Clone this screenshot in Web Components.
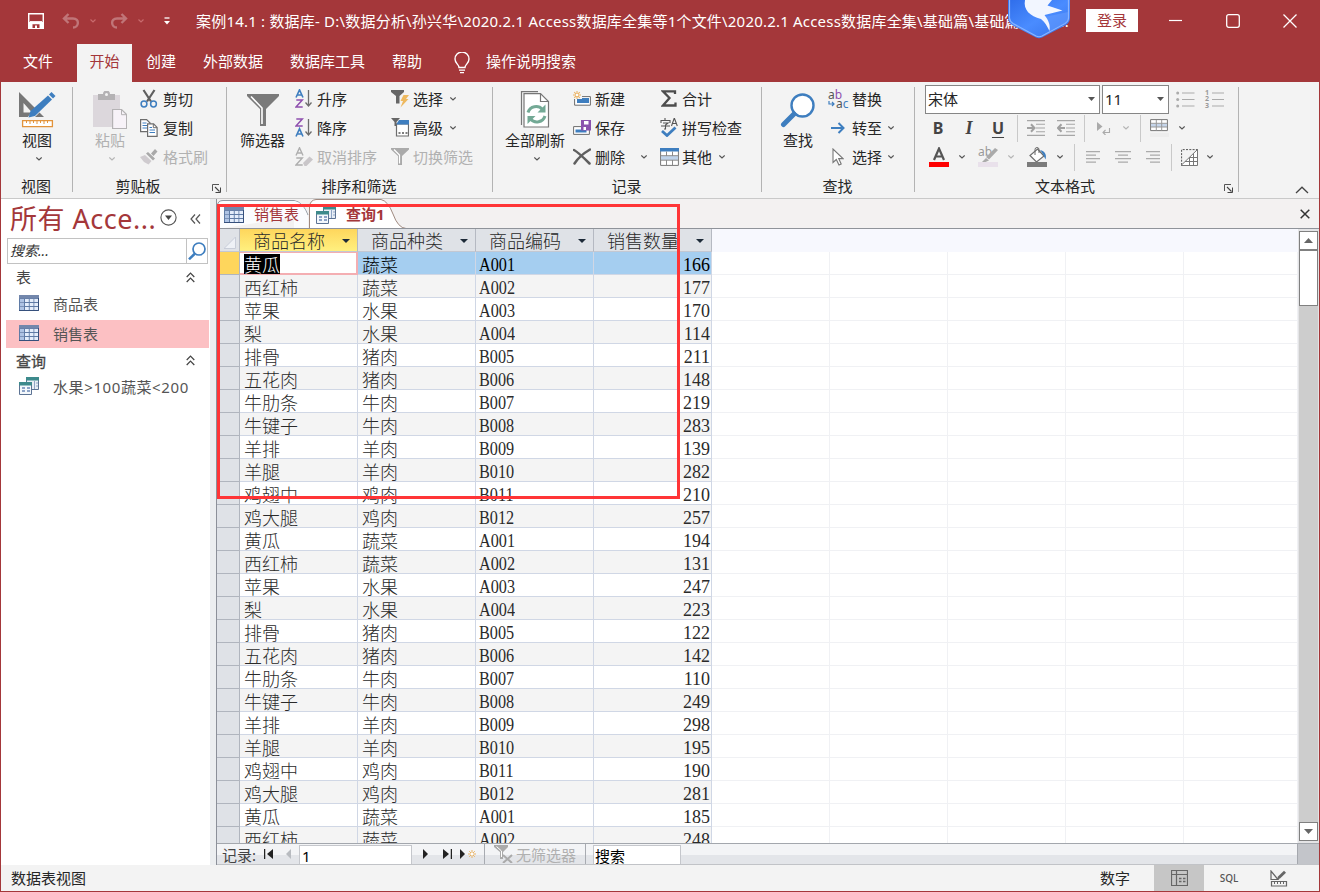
<!DOCTYPE html>
<html lang="zh-CN">
<head>
<meta charset="utf-8">
<title>案例14.1 : 数据库</title>
<style>
  body {
    margin: 0;
    font: 15px/20px "Noto Sans", "Noto Sans CJK SC", sans-serif;
    color: #262626;
  }
</style>
</head>
<body>
<access-window></access-window>

<script>
const ICONS = {
  save: [16, 16, '<path d="M.7.7h14.6v14.6H.7z" fill="none" stroke="#fff" stroke-width="1.5"/><path d="M1 9h14v6H1z" fill="#fff"/><path d="M4.500 11.200h7V15H9V12.500H7V15H4.500z" fill="#a4373a"/><path d="M2 8.800h12" stroke="#fff" stroke-width="1.400"/>'],
  undo: [18, 16, '<path d="M6.500 1L2 5.500 6.500 10M2.500 5.500H11c7 0 6 9 0 9" fill="none" stroke="#c07578" stroke-width="2.400"/>'],
  redo: [18, 16, '<path d="M11.500 1L16 5.500 11.500 10M15.500 5.500H7c-7 0-6 9 0 9" fill="none" stroke="#c07578" stroke-width="2.400"/>'],
  chevronRed: [6, 4, '<path d="M.5.500L3 3 5.500.500" fill="none" stroke="#c86a6d" stroke-width="1.200"/>'],
  customize: [6, 8, '<path d="M.5 1h5" stroke="#fff" stroke-width="1.300"/><path d="M0 4h6L3 7.500z" fill="#fff"/>'],
  bird: [62, 39, '<defs><linearGradient id="g" x1="0" y1="0" x2="1" y2="1"><stop offset="0" stop-color="#2f6dea"/><stop offset=".5" stop-color="#4a8cff"/><stop offset="1" stop-color="#3470e8"/></linearGradient></defs><path d="M0 0V18Q0 22 4 25L28 37.500Q31 39 34 37.500L58 25Q62 22 62 18V0z" fill="url(#g)"/><path d="M1.500 0V18Q1.500 21 5 23.500L28 36Q31 37.500 34 36L57 23.500Q60.500 21 60.500 18V0" fill="none" stroke="#8cb6ff" stroke-width="1.200"/><path d="M36 17L60 12V19Q60 22 56 24L42 31z" fill="#6a9fff" opacity=".5"/><path d="M17 0C15 10 22 16 33 19c4 3 6 7 8.500 12 1-6-1-11-5-16l18-4.500L39.500 5.500 44 0z" fill="#f2f6ff"/>'],
  minimize: [13, 14, '<path d="M0 6.500h13" stroke="#fff" stroke-width="1.200"/>'],
  maximize: [14, 14, '<rect x=".7" y=".7" width="12.600" height="12.600" rx="2" fill="none" stroke="#fff" stroke-width="1.300"/>'],
  close: [14, 14, '<path d="M.5.500l13 13M13.500.500l-13 13" stroke="#fff" stroke-width="1.300"/>'],
  bulb: [16, 22, '<path d="M5 15.500c0-3-4-4-4-8.500a7 7 0 0114 0c0 4.500-4 5.500-4 8.500z" fill="none" stroke="#fff" stroke-width="1.400"/><path d="M5 18.200h6M6 20.700h4" stroke="#fff" stroke-width="1.300"/>'],
  chevron: [6, 4, '<path d="M.3.500L3 3 5.700.500" fill="none" stroke="#555" stroke-width="1.200"/>'],
  chevronOff: [6, 4, '<path d="M.3.500L3 3 5.700.500" fill="none" stroke="#b5b5b5" stroke-width="1.200"/>'],
  view: [38, 38, '<path d="M1 1v25h25zM5.500 12v9.500h8.500z" fill="#777" fill-rule="evenodd"/><path d="M9 27L31 0l6 6-21 21z" fill="#f3f3f3"/><path d="M10.500 26.500l2-6.500L30 4.500l4 4L17 25z" fill="#3e7ebf"/><path d="M31 3.500L33.500 1l4 4L35 7.500z" fill="#3e7ebf"/><path d="M4.600 29.600h29.800v6H4.600z" fill="#fff" stroke="#e2933b" stroke-width="1.300"/><path d="M8.500 30v2M12 30v3M15.500 30v2M19 30v3M22.500 30v2M26 30v3M29.500 30v2" stroke="#e2933b"/>'],
  paste: [34, 38, '<path d="M0 4h27v32H0z" fill="#dcd7dc"/><path d="M5 9V3h5a3.500 3.500 0 017 0h5v6z" fill="#b4b2b4"/><circle cx="13.500" cy="3.500" r="1.500" fill="#f3f3f3"/><path d="M19.600 22h9l5 5v14h-14z" transform="translate(0 -3.500)" fill="#f7f2f8" stroke="#b4b2b4" stroke-width="1.200"/><path d="M28.500 18.500v5.200h5" fill="none" stroke="#b4b2b4"/>'],
  cut: [18, 19, '<path d="M3.500 1l7.500 11.500M14.500 1L7 12.500" stroke="#5f5f5f" stroke-width="2.200"/><circle cx="4" cy="15" r="2.900" fill="none" stroke="#3e7ebf" stroke-width="1.500"/><circle cx="13.500" cy="15" r="2.900" fill="none" stroke="#3e7ebf" stroke-width="1.500"/>'],
  copy: [18, 18, '<path d="M.6.600h6l3.500 3.500v8.500H.6z" fill="#fff" stroke="#6d6d6d" stroke-width="1.200"/><path d="M2.500 4h4M2.500 6.500h5M2.500 9h5" stroke="#3e7ebf"/><path d="M7.600 4.900h6l3.500 3.500v9H7.600z" fill="#fff" stroke="#6d6d6d" stroke-width="1.200"/><path d="M13.300 5v3.700H17" fill="none" stroke="#6d6d6d"/><path d="M9.500 8.500h2.500M9.500 11h5.500M9.500 13.500h5.500" stroke="#3e7ebf"/>'],
  brush: [18, 16, '<path d="M0 8l5-2 6.500 6-3 3.500L4 13l-4-5z" fill="#cfcbcf"/><path d="M6 4.500L8 3l7 6.500-2 2zM11 4.500L15 0l2.500 2.500-4 4.500z" fill="#a9a9a9"/>'],
  funnel: [32, 32, '<path d="M0 0h32v2L19 15v17h-6V15L0 2z" fill="#7a7a7a"/><path d="M4 2.500L15 14v16" fill="none" stroke="#fff" stroke-width="1.600"/>'],
  sortAsc: [18, 19, '<path d="M1 8.500L4.500.800 8 8.500M2.200 6h4.600" fill="none" stroke="#3e7ebf" stroke-width="1.600"/><path d="M1.300 11h6L1 18h6.700" fill="none" stroke="#8e4fae" stroke-width="1.500"/><path d="M13.500 1v16M10.500 13.500l3 3.500 3-3.500" fill="none" stroke="#6d6d6d" stroke-width="1.300"/>'],
  sortDesc: [18, 19, '<path d="M1.300 1h6L1 8h6.700" fill="none" stroke="#8e4fae" stroke-width="1.500"/><path d="M1 18.500l3.500-7.700L8 18.500M2.200 16h4.600" fill="none" stroke="#3e7ebf" stroke-width="1.600"/><path d="M13.500 1v16M10.500 13.500l3 3.500 3-3.500" fill="none" stroke="#6d6d6d" stroke-width="1.300"/>'],
  sortClear: [18, 19, '<path d="M1 8.500L4.500.800 8 8.500M2.200 6h4.600M1.300 11h6L1 18h6.700" fill="none" stroke="#aeaeae" stroke-width="1.400"/><path d="M8 16l6.500-6.500 3.500 3-6.500 6.500H9.500z" fill="#c9c6c9"/>'],
  filterSelect: [18, 18, '<path d="M0 0h13v2L8.500 6v7.500H5V6L0 2z" fill="#666"/><path d="M12.500 5H18l-3 4h2.500l-8 8.500 2.500-6.500H9.500z" fill="#eeb95f"/>'],
  filterAdvanced: [18, 19, '<path d="M5.500 6h12v12h-12z" fill="#fff" stroke="#6d6d6d" stroke-width="1.200"/><path d="M8 2h10v4.500H5z" fill="#3e7ebf"/><path d="M0 0h9L5.500 4v4H3.500V4z" fill="#666"/><path d="M7.500 15h2M11 15h2M14.500 15h2" stroke="#555" stroke-width="1.600"/>'],
  filterToggle: [18, 17, '<path d="M0 0h18v1.500L11 8v9H7V8L0 1.500z" fill="#aaa"/><path d="M3 1.500L8.500 7v8.500" fill="none" stroke="#fff" stroke-width="1.200"/>'],
  refresh: [30, 38, '<path d="M1.500 34V.600H18" fill="none" stroke="#777" stroke-width="1.200"/><path d="M4 2.600h16.500l8 8V36H4z" fill="#fff" stroke="#777" stroke-width="1.200"/><path d="M20.500 2.500v8h8" fill="none" stroke="#777" stroke-width="1.200"/><path d="M8 21.500a8.500 8.500 0 0114.500-3M25 25a8.500 8.500 0 01-14.500 3" fill="none" stroke="#73a995" stroke-width="3"/><path d="M25.500 13.500v8h-8zM7.500 33v-8h8z" fill="#73a995"/>'],
  recordNew: [18, 15, '<path d="M1.600 5.600h15.800v8.600H1.600z" fill="#fff" stroke="#6d6d6d"/><path d="M4 7h12v5H4z" fill="#3e7ebf"/><path d="M0 0h9v8H0z" fill="#f3f3f3"/><path d="M4 0v8M0 4h8M1.200 1.200l5.600 5.600M6.800 1.200L1.200 6.800" stroke="#ebb363" stroke-width="1.100"/><circle cx="4" cy="4" r="1.200" fill="#fff"/>'],
  recordSave: [18, 16, '<path d="M.6 6.600h15.800v7.800H.6z" fill="#fff" stroke="#6d6d6d"/><path d="M2.500 9.500h11v3h-11z" fill="#3e7ebf"/><path d="M8 0h10v10.500H8z" fill="#8b52ad"/><path d="M11 1h4.500v3.500H11zM10.500 7H13v3h-2.500z" fill="#fff"/>'],
  recordDelete: [18, 17, '<path d="M1 2C5 4 12 11 16.500 15.500M17 1.500C11 5 5 10 1.500 15.500" fill="none" stroke="#5f5f5f" stroke-width="2.500" stroke-linecap="round"/>'],
  sigma: [16, 17, '<path d="M14 4V1.300H2L8.500 8 2 15.500h12.500V12.500" fill="none" stroke="#4d4d4d" stroke-width="2.300"/>'],
  spelling: [18, 19, '<path d="M5 0v2M1 5V2.500h9V5M3 5h5L5.500 7v4H4M1 8h9" fill="none" stroke="#555" stroke-width="1.100"/><path d="M11.500 8L14.300 0l3 8M12.300 5.500h4" fill="none" stroke="#555" stroke-width="1.100"/><path d="M2 13l5 4.500 8.500-8" fill="none" stroke="#3e7ebf" stroke-width="2.800"/>'],
  tableMore: [19, 18, '<path d="M.6.600h17.800v16.800H.6z" fill="#fff" stroke="#777"/><path d="M0 0h19v3.500H0z" fill="#3e7ebf"/><path d="M1 8h17v4H1z" fill="#bfd3ea"/><path d="M6.500 3.500V8M12.500 3.500V8M1 7.700h17M1 12.200h17M6.500 12v5M12.500 12v5" stroke="#8a8a8a"/>'],
  find: [36, 35, '<circle cx="22.500" cy="12.500" r="11" fill="#fff" stroke="#3e7ebf" stroke-width="2.400"/><path d="M14 21L3.500 31.500" stroke="#3e7ebf" stroke-width="5" stroke-linecap="round"/>'],
  arrowRight: [14, 12, '<path d="M0 6h12M7.500 1l5 5-5 5" fill="none" stroke="#3e7ebf" stroke-width="2"/>'],
  replaceArrow: [7, 6, '<path d="M1 0v3h5M4 1l2 2-2 2" fill="none" stroke="#3e7ebf" stroke-width="1.200"/>'],
  cursor: [12, 18, '<path d="M1 1v13.500l3.300-3L7 17l2.200-1L6.700 10.600H11z" fill="#fff" stroke="#777" stroke-width="1.100"/>'],
  launcher: [9, 9, '<path d="M.5 7V.500H7" fill="none" stroke="#555"/><path d="M3 3l4.500 4.500" stroke="#444" stroke-width="1.100"/><path d="M8.500 3.500v5h-5" fill="none" stroke="#444"/>'],
  collapse: [14, 8, '<path d="M1 7l6-5.800L13 7" fill="none" stroke="#444" stroke-width="1.300"/>'],
  dropdown: [7, 4, '<path d="M0 0h7L3.500 4z" fill="#555"/>'],
  bullets: [19, 17, '<g fill="#ababab"><circle cx="1.700" cy="2" r="1.500"/><circle cx="1.700" cy="8.500" r="1.500"/><circle cx="1.700" cy="15" r="1.500"/></g><path d="M6 2h12.500M6 8.500h12.500M6 15h12.500" stroke="#ababab" stroke-width="1.200"/>'],
  lines3: [12, 17, '<path d="M0 2h12M0 8.500h12M0 15h12" stroke="#ababab" stroke-width="1.200"/>'],
  indent: [18, 16, '<path d="M0 .600h18M9 4.300h9M9 8h9M9 11.700h9M0 15.400h18" stroke="#a6a6a6" stroke-width="1.100"/><path d="M0 8h7M4 4.300L7.500 8 4 11.700" fill="none" stroke="#a0a0a0" stroke-width="2"/>'],
  outdent: [18, 16, '<path d="M0 .600h18M9 4.300h9M9 8h9M9 11.700h9M0 15.400h18" stroke="#a6a6a6" stroke-width="1.100"/><path d="M1 8h7M4.500 4.300L1 8l3.500 3.700" fill="none" stroke="#a0a0a0" stroke-width="2"/>'],
  direction: [14, 13, '<path d="M0 0l5.500 4.500L0 9z" fill="#aaa"/><path d="M12.500 6v4.500H6M8.500 8L6 10.500 8.500 13" fill="none" stroke="#aaa" stroke-width="1.100"/>'],
  gridlines: [19, 18, '<path d="M.6.600h16.800v11H.6z" fill="#fff" stroke="#777"/><path d="M1 4.500h16v3.500H1z" fill="#c5d5ea"/><path d="M6.300 1v10.500M11.700 1v10.500M1 4.300h16M1 8h16" stroke="#999"/><path d="M0 14h19v4H0z" fill="#ededed"/>'],
  fontColor: [20, 20, '<path d="M5 13L10 1.500 15 13M6.800 9.500h6.400" fill="none" stroke="#555" stroke-width="2.200"/><path d="M0 15h20v5H0z" fill="#fe0000"/>'],
  highlight: [20, 20, '<path d="M17 1l3 2-9 9.500-3-2.500zM8 11l3 2.500-3.500 1.500H4z" fill="#aaa"/><path d="M0 15h20v5H0z" fill="#e9e1eb"/>'],
  fill: [20, 20, '<path d="M10.500 2L17 9l-7.500 6L3 8.500z" fill="#fff" stroke="#6d6d6d" stroke-width="1.200"/><path d="M8 8V2.500a2 2 0 014 0V6" fill="none" stroke="#6d6d6d"/><path d="M13 3c5 1 7 5 5.500 9.500C17.500 11 17 8 13 3z" fill="#3e7ebf"/><path d="M0 15h20v5H0z" fill="#7b7b7b"/>'],
  alignLeft: [14, 12, '<path d="M0 .600h14M0 4.100h10M0 7.600h14M0 11.100h10" stroke="#ababab" stroke-width="1.100"/>'],
  alignCenter: [16, 12, '<path d="M0 .600h16M3 4.100h10M0 7.600h16M3 11.100h10" stroke="#ababab" stroke-width="1.100"/>'],
  alignRight: [14, 12, '<path d="M0 .600h14M4 4.100h10M0 7.600h14M4 11.100h10" stroke="#ababab" stroke-width="1.100"/>'],
  altRow: [17, 17, '<path d="M.6 16V.600H17" fill="none" stroke="#555" stroke-dasharray="2 1.300"/><path d="M0 16.500L16.500.500v16z" fill="#fff"/><path d="M0 16.500L16.500.500v16zM4 12.500h12.500M8.500 8.500h8M12.500 4.500v12M8.500 8.500v8" fill="none" stroke="#777"/>'],
  navMenu: [17, 17, '<circle cx="8.500" cy="8.500" r="7.600" fill="#fff" stroke="#555" stroke-width="1.100"/><path d="M5 6.500h7L8.500 11z" fill="#444"/>'],
  navHide: [11, 10, '<path d="M5 .500L1 5l4 4.500M10 .500L6 5l4 4.500" fill="none" stroke="#555" stroke-width="1.200"/>'],
  navSearch: [18, 18, '<circle cx="11" cy="7" r="6" fill="#fff" stroke="#3e7ebf" stroke-width="1.700"/><path d="M7 11.500L1 17.300" stroke="#3e7ebf" stroke-width="2.500"/>'],
  doubleUp: [9, 11, '<path d="M.7 5l3.800-4 3.800 4M.7 10l3.800-4 3.800 4" fill="none" stroke="#444" stroke-width="1.200"/>'],
  table: [20, 16, '<path d="M0 0h20v16H0z" fill="#5f7ba6"/><path d="M0 0h20v3.500H0z" fill="#7387ac"/><path d="M1 4h4v11H1z" fill="#aec3e4"/><path d="M6 4h3.800v3H6zM10.700 4h3.800v3h-3.800zM15.300 4H19v3h-3.700zM6 8h3.800v3H6zM10.700 8h3.800v3h-3.800zM15.300 8H19v3h-3.700zM6 12h3.800v3H6zM10.700 12h3.800v3h-3.800zM15.300 12H19v3h-3.700z" fill="#e4edfb"/><path d="M1 7.500h4M1 11.500h4" stroke="#7c92b8"/><path d="M19.500 3v12.500H0" fill="none" stroke="#36507c"/>'],
  query: [20, 18, '<path d="M7.500.500h12v12h-12z" fill="#e8eef5" stroke="#5c7394"/><path d="M7 0h13v3.500H7z" fill="#3d8a8c"/><path d="M15.500 4v8M17 6h2M17 9h2" stroke="#8fa5c5"/><path d="M.5 5.500h12v12H.5z" fill="#f4f8fc" stroke="#5c7394"/><path d="M0 5h13v3.500H0z" fill="#3d8a8c"/><path d="M3 11h3M3 14h3M8 11h3M8 14h3" stroke="#6a86b5" stroke-width="1.400"/>'],
  corner: [12, 12, '<path d="M11.500 0v11.500H0z" fill="#eef1f6" stroke="#c8cdd8"/>'],
  headDrop: [8, 4, '<path d="M0 0h8L4 4z" fill="#1d2a38"/>'],
  closeDoc: [10, 10, '<path d="M.7.700l8.600 8.600M9.300.700L.7 9.300" stroke="#333" stroke-width="1.500"/>'],
  first: [9, 10, '<path d="M.6 0v10" stroke="#222" stroke-width="1.300"/><path d="M9 0v10L3 5z" fill="#222"/>'],
  prev: [5, 10, '<path d="M5 0v10L0 5z" fill="#b8bbc0"/>'],
  next: [5, 10, '<path d="M0 0v10l5-5z" fill="#222"/>'],
  last: [9, 10, '<path d="M8.400 0v10" stroke="#222" stroke-width="1.300"/><path d="M0 0v10l6-5z" fill="#222"/>'],
  addRecord: [16, 10, '<path d="M0 0v10l5-5z" fill="#222"/><path d="M12 1v8M8 5h8M9.200 2.200l5.600 5.600M14.800 2.200L9.200 7.800" stroke="#ebb363"/><circle cx="12" cy="5" r="1.300" fill="#fff"/>'],
  noFilter: [20, 18, '<path d="M0 0h14v2L9 7v7H6V7L0 2z" fill="#aaa"/><path d="M2.500 1.500L7.500 6v6" fill="none" stroke="#fff"/><path d="M9 10l9 8M18 10l-9 8" stroke="#aaa" stroke-width="2"/>'],
  up: [9, 5, '<path d="M0 5h9L4.500 0z" fill="#666"/>'],
  down: [9, 5, '<path d="M0 0h9L4.500 5z" fill="#666"/>'],
  sheetView: [17, 16, '<path d="M.5.500h16v15H.5zM.5 4.500h16M5.500.500v15" fill="none" stroke="#666" stroke-width="1.200"/><path d="M8 8.500h2.500M12 8.500h2.500M8 11.500h2.500M12 11.500h2.500" stroke="#666" stroke-width="1.300"/>'],
  designView: [18, 17, '<path d="M1 1v8.500h7z" fill="none" stroke="#666" stroke-width="1.200"/><path d="M7 9.500l1-3L14 .800l2 2L10 8.500z" fill="#666"/><path d="M1.500 11.500h15v4.500h-15z" fill="none" stroke="#666" stroke-width="1.200"/><path d="M4.500 12v2M7.500 12v2M10.500 12v2M13.500 12v2" stroke="#666"/>']
};

// Shared base: puts the markup returned by render() in an open shadow root
class BaseElement extends HTMLElement {
  constructor() {
    super();
    this.attachShadow({ mode: "open" });
  }
  connectedCallback() {
    const template = document.createElement("template");
    template.innerHTML = this.render();
    this.shadowRoot.replaceChildren(template.content.cloneNode(true));
  }
  attr(name) {
    return this.getAttribute(name) || "";
  }
}

class UiIcon extends BaseElement {
  render() {
    const [w, h, body] = ICONS[this.attr("name")];
    return `<style>:host{display:inline-block;flex:none;width:${w}px;height:${h}px}svg{display:block}</style>
<svg width="${w}" height="${h}" viewBox="0 0 ${w} ${h}">${body}</svg>`;
  }
}
customElements.define("ui-icon", UiIcon);

class TitleBar extends BaseElement {
  render() {
    return `
<style>
  :host { display: flex; position: relative; height: 44px; box-sizing: border-box; padding: 0 23px 3px 28px; align-items: center; background: #a4373a; color: #fff; }
  .undo { margin-left: 18px; }
  .c1 { margin: 0 14px 0 10px; }
  .c2 { margin: 0 20px 0 10px; }
  .title { display: flex; justify-content: space-between; width: 873px; margin-left: 26px; flex: none; white-space: nowrap; letter-spacing: 0.2px; }
  .bird { position: absolute; left: 1008px; top: 0; }
  .login { box-sizing: border-box; width: 52px; height: 23px; line-height: 22px; margin-left: 17px; flex: none; background: #fff; color: #a4373a; text-align: center; }
  .min { margin-left: 31px; }
  .max { margin-left: 44px; }
  .close { margin-left: 43px; }
</style>
<ui-icon name="save"></ui-icon>
<ui-icon class="undo" name="undo"></ui-icon><ui-icon class="c1" name="chevronRed"></ui-icon>
<ui-icon name="redo"></ui-icon><ui-icon class="c2" name="chevronRed"></ui-icon>
<ui-icon name="customize"></ui-icon>
<div class="title"><span>案例14.1 : 数据库- D:\\数据分析\\孙兴华\\2020.2.1 Access数据库全集等1个文件\\2020.2.1 Access数据库全集\\基础篇\\基础篇</span><span>...</span></div>
<div class="login">登录</div>
<ui-icon class="min" name="minimize"></ui-icon>
<ui-icon class="max" name="maximize"></ui-icon>
<ui-icon class="close" name="close"></ui-icon>
<ui-icon class="bird" name="bird"></ui-icon>`;
  }
}
customElements.define("title-bar", TitleBar);

class RibbonTabs extends BaseElement {
  render() {
    return `
<style>
  :host { display: flex; height: 38px; line-height: 35px; background: #a4373a; color: #fff; }
  span { margin-right: 27px; white-space: nowrap; }
  .file { margin: 0 24px 0 23px; }
  .active { width: 55px; margin-right: 14px; background: #f3f3f3; color: #a4373a; text-align: center; }
  ui-icon { margin: 8px 16px 0 5px; }
</style>
<span class="file">文件</span><span class="active">开始</span><span>创建</span><span>外部数据</span><span>数据库工具</span><span>帮助</span>
<ui-icon name="bulb"></ui-icon><span>操作说明搜索</span>`;
  }
}
customElements.define("ribbon-tabs", RibbonTabs);

class RibbonGroup extends BaseElement {
  render() {
    const launcher = this.hasAttribute("launcher") ? '<ui-icon name="launcher"></ui-icon>' : "";
    return `
<style>
  :host { display: grid; grid-template-rows: 87px 24px; box-sizing: border-box; flex: none; height: 105px; margin-top: 5px; border-right: 1px solid #b3b3b3; }
  .content { display: flex; align-items: flex-start; margin-top: -3px; }
  .label { display: flex; align-items: center; white-space: nowrap; height: 24px; margin-left: -1px; }
  .label span { flex: 1; text-align: center; }
  .label ui-icon { margin: 4px 5px 0 8px; }
</style>
<div class="content"><slot></slot></div>
<div class="label"><span>${this.attr("label")}</span>${launcher}</div>`;
  }
}
customElements.define("ribbon-group", RibbonGroup);

class LargeButton extends BaseElement {
  render() {
    const off = this.hasAttribute("disabled");
    const arrow = this.hasAttribute("arrow") ? `<ui-icon class="arrow" name="${off ? "chevronOff" : "chevron"}"></ui-icon>` : "";
    return `
<style>
  :host { display: flex; flex: none; flex-direction: column; align-items: center; color: ${off ? "#b1b1b1" : "#262626"}; }
  .icon { display: flex; align-items: center; height: 40px; margin-top: 6px; }
  .text { height: 20px; white-space: nowrap; }
  .arrow { margin: 7px 0 0 4px; }
</style>
<div class="icon"><ui-icon name="${this.attr("icon")}"></ui-icon></div>
<div class="text">${this.attr("text")}</div>${arrow}`;
  }
}
customElements.define("large-button", LargeButton);

class ButtonColumn extends BaseElement {
  render() {
    return `<style>:host{display:grid;flex:none;grid-auto-rows:29px}</style><slot></slot>`;
  }
}
customElements.define("button-column", ButtonColumn);

class SmallButton extends BaseElement {
  render() {
    const off = this.hasAttribute("disabled");
    const icon = this.attr("icon") ? `<ui-icon name="${this.attr("icon")}"></ui-icon>` : "<slot></slot>";
    const arrow = this.hasAttribute("arrow") ? '<ui-icon class="arrow" name="chevron"></ui-icon>' : "";
    return `
<style>
  :host { display: flex; align-items: center; white-space: nowrap; color: ${off ? "#b1b1b1" : "#262626"}; }
  .icon { display: flex; justify-content: center; width: 20px; margin-right: var(--icon-gap, 3px); }
  .arrow { margin-left: ${this.attr("arrow") || 7}px; }
</style>
<div class="icon">${icon}</div><span>${this.attr("text")}</span>${arrow}`;
  }
}
customElements.define("small-button", SmallButton);

class ReplaceIcon extends BaseElement {
  render() {
    return `
<style>
  :host { display: grid; grid-template-rows: 9px 9px; width: 20px; font: 12px/9px "Noto Sans", sans-serif; color: #555; }
  b { font-weight: 400; color: #8e4fae; }
  i { font-style: normal; color: #3e7ebf; }
  div { display: flex; }
  ui-icon { margin: 2px 1px 0 0; }
</style>
<div>a<b>b</b></div><div><ui-icon name="replaceArrow"></ui-icon>a<i>c</i></div>`;
  }
}
customElements.define("replace-icon", ReplaceIcon);

class FormatTools extends BaseElement {
  render() {
    return `
<style>
  :host { display: grid; grid-template-rows: 29px 29px 29px; flex: none; margin: 1px 0 0 10px; }
  .row { display: flex; align-items: center; }
  .row + .row { margin-top: -1px; }
  .combo { display: flex; align-items: center; box-sizing: border-box; height: 29px; border: 1px solid #868686; background: #fff; padding: 0 4px 1px 2px; justify-content: space-between; }
  .family { width: 175px; margin-right: 2px; }
  .size { width: 67px; margin-right: 7px; }
  .sep { flex: none; width: 1px; height: 27px; background: #c9c9c9; }
  .glyph { flex: none; width: 20px; text-align: center; font: bold 16px/20px "Noto Sans", sans-serif; color: #444; }
  .i { font-size: 18px; font-style: italic; font-family: "Liberation Serif", serif; }
  .u { text-decoration: underline; text-underline-offset: 3px; }
  .nums { display: grid; grid-template-rows: 6.500px 6.500px 6.500px; margin: 0 3px 0 10px; font: bold 7px/6.500px "Noto Sans", sans-serif; color: #999; }
  .hl { display: grid; }
  .hl > * { grid-area: 1 / 1; }
  .hl span { font: 12px/12px "Noto Sans", sans-serif; color: #999; margin-top: -1px; }
</style>
<div class="row">
  <div class="combo family">宋体<ui-icon name="dropdown"></ui-icon></div>
  <div class="combo size">11<ui-icon name="dropdown"></ui-icon></div>
  <ui-icon name="bullets"></ui-icon>
  <div class="nums"><span>1</span><span>2</span><span>3</span></div><ui-icon name="lines3"></ui-icon>
</div>
<div class="row">
  <span class="glyph" style="margin-left:3px">B</span><span class="glyph i" style="margin-left:11px">I</span><span class="glyph u" style="margin-left:9px">U</span>
  <div class="sep" style="margin:0 9px"></div>
  <ui-icon name="indent"></ui-icon><ui-icon name="outdent" style="margin-left:12px"></ui-icon>
  <div class="sep" style="margin:0 12px 0 9px"></div>
  <ui-icon name="direction"></ui-icon><ui-icon name="chevronOff" style="margin-left:12px"></ui-icon>
  <div class="sep" style="margin:0 9px 0 11px"></div>
  <ui-icon name="gridlines"></ui-icon><ui-icon name="chevron" style="margin-left:10px"></ui-icon>
</div>
<div class="row">
  <ui-icon name="fontColor" style="margin-left:4px"></ui-icon><ui-icon name="chevron" style="margin:0 13px 0 10px"></ui-icon>
  <div class="hl"><span>ab</span><ui-icon name="highlight"></ui-icon></div><ui-icon name="chevronOff" style="margin:0 13px 0 10px"></ui-icon>
  <ui-icon name="fill"></ui-icon><ui-icon name="chevron" style="margin-left:10px"></ui-icon>
  <div class="sep" style="margin:0 11px"></div>
  <ui-icon name="alignLeft"></ui-icon><ui-icon name="alignCenter" style="margin:0 15px"></ui-icon><ui-icon name="alignRight"></ui-icon>
  <div class="sep" style="margin:0 9px 0 11px"></div>
  <ui-icon name="altRow"></ui-icon><ui-icon name="chevron" style="margin-left:9px"></ui-icon>
</div>`;
  }
}
customElements.define("format-tools", FormatTools);

class AppRibbon extends BaseElement {
  render() {
    return `
<style>
  :host { display: flex; box-sizing: border-box; height: 117px; background: #f3f3f3; border-bottom: 1px solid #c9c9c9; }
  .collapse { margin: auto 10px 4px auto; }
</style>
<ribbon-group label="视图" style="width:72px">
  <large-button icon="view" text="视图" arrow style="margin-left:17px"></large-button>
</ribbon-group>
<ribbon-group label="剪贴板" launcher style="width:154px">
  <large-button icon="paste" text="粘贴" arrow disabled style="margin-left:20px"></large-button>
  <button-column style="margin-left:12px;--icon-gap:4px">
    <small-button icon="cut" text="剪切"></small-button>
    <small-button icon="copy" text="复制"></small-button>
    <small-button icon="brush" text="格式刷" disabled></small-button>
  </button-column>
</ribbon-group>
<ribbon-group label="排序和筛选" style="width:266px">
  <large-button icon="funnel" text="筛选器" style="margin-left:13px"></large-button>
  <button-column style="margin-left:9px;width:96px">
    <small-button icon="sortAsc" text="升序"></small-button>
    <small-button icon="sortDesc" text="降序"></small-button>
    <small-button icon="sortClear" text="取消排序" disabled></small-button>
  </button-column>
  <button-column>
    <small-button icon="filterSelect" text="选择" arrow></small-button>
    <small-button icon="filterAdvanced" text="高级" arrow></small-button>
    <small-button icon="filterToggle" text="切换筛选" disabled></small-button>
  </button-column>
</ribbon-group>
<ribbon-group label="记录" style="width:269px">
  <large-button icon="refresh" text="全部刷新" arrow style="margin-left:12px"></large-button>
  <button-column style="margin-left:7px;width:87px">
    <small-button icon="recordNew" text="新建"></small-button>
    <small-button icon="recordSave" text="保存"></small-button>
    <small-button icon="recordDelete" text="删除" arrow="16"></small-button>
  </button-column>
  <button-column>
    <small-button icon="sigma" text="合计"></small-button>
    <small-button icon="spelling" text="拼写检查"></small-button>
    <small-button icon="tableMore" text="其他" arrow></small-button>
  </button-column>
</ribbon-group>
<ribbon-group label="查找" style="width:153px">
  <large-button icon="find" text="查找" style="margin-left:18px"></large-button>
  <button-column style="margin-left:12px;--icon-gap:4px">
    <small-button text="替换"><replace-icon></replace-icon></small-button>
    <small-button icon="arrowRight" text="转至" arrow="6"></small-button>
    <small-button icon="cursor" text="选择" arrow="6"></small-button>
  </button-column>
</ribbon-group>
<ribbon-group label="文本格式" launcher style="width:324px"><format-tools></format-tools></ribbon-group>
<ui-icon class="collapse" name="collapse"></ui-icon>`;
  }
}
customElements.define("app-ribbon", AppRibbon);

class NavItem extends BaseElement {
  render() {
    const selected = this.hasAttribute("selected");
    return `
<style>
  :host { display: flex; align-items: center; height: 28px; margin-left: 5px; padding-left: 13px; white-space: nowrap; color: #555; background: ${selected ? "#fcc0c3" : "none"}; }
  ui-icon { margin: -3px 14px 0 0; }
</style>
<ui-icon name="${this.attr("icon")}"></ui-icon><slot></slot>`;
  }
}
customElements.define("nav-item", NavItem);

class NavPane extends BaseElement {
  render() {
    return `
<style>
  :host { display: block; box-sizing: border-box; width: 209px; flex: none; background: #fff; border-right: 1px solid #fff; }
  .head { display: flex; height: 40px; align-items: center; padding-left: 9px; }
  .head span { width: 150px; flex: none; font-size: 27px; line-height: 38px; letter-spacing: .5px; white-space: nowrap; color: #a4373a; }
  .head ui-icon { margin-top: -3px; }
  .head ui-icon + ui-icon { margin: -1px 0 0 13px; }
  .search { display: flex; box-sizing: border-box; width: 201px; height: 26px; margin: -1px 0 0 6px; border: 1px solid #c2c2c2; line-height: 24px; }
  .search span { flex: 1; padding-left: 2px; font-size: 14px; font-style: italic; color: #333; border-right: 1px solid #c2c2c2; }
  .search ui-icon { margin: 3px 1px 0; }
  .group { display: flex; align-items: center; justify-content: space-between; height: 26px; padding: 0 14px 0 15px; color: #444; }
  .second { height: 25px; }
</style>
<div class="head"><span>所有 Acce...</span><ui-icon name="navMenu"></ui-icon><ui-icon name="navHide"></ui-icon></div>
<div class="search"><span>搜索...</span><ui-icon name="navSearch"></ui-icon></div>
<div class="group">表<ui-icon name="doubleUp"></ui-icon></div>
<nav-item icon="table">商品表</nav-item>
<nav-item icon="table" selected style="margin-top:2px">销售表</nav-item>
<div class="group second" style="-webkit-text-stroke:.3px">查询<ui-icon name="doubleUp"></ui-icon></div>
<nav-item icon="query" style="letter-spacing:.6px">水果&gt;100蔬菜&lt;200</nav-item>`;
  }
}
customElements.define("nav-pane", NavPane);

class SheetTab extends BaseElement {
  render() {
    const active = this.hasAttribute("active");
    const w = active ? 107 : 92;
    const shape = active
      ? '<path d="M.5 30V8Q1 1 7 .500H72Q79 2 84 15Q89 29 97 29.500" fill="#fff" stroke="#a08a80"/>'
      : '<path d="M.5 30V6Q1 1.500 6 1.500H77Q86 3 91 16" fill="#fbfcfe" stroke="#9098a2"/><path d="M77 2Q86 3 91 18V29H77z" fill="#fbfcfe"/>';
    return `
<style>
  :host { display: grid; flex: none; width: ${w}px; height: 29px; overflow: hidden; color: #a4373a; font-weight: ${active ? "bold" : "normal"}; }
  svg, .content { grid-area: 1 / 1; }
  .content { display: flex; align-items: center; z-index: 1; padding: 1px 0 0 7px; height: 29px; box-sizing: border-box; }
  ui-icon { margin: 1px 10px 0 0; }
</style>
<svg width="${w}" height="30">${shape}</svg>
<div class="content"><ui-icon name="${this.attr("icon")}"></ui-icon><slot></slot></div>`;
  }
}
customElements.define("sheet-tab", SheetTab);

const COLUMNS = ["商品名称", "商品种类", "商品编码", "销售数量"];
const PRODUCTS = [
  ["黄瓜", "蔬菜", "A001"],
  ["西红柿", "蔬菜", "A002"],
  ["苹果", "水果", "A003"],
  ["梨", "水果", "A004"],
  ["排骨", "猪肉", "B005"],
  ["五花肉", "猪肉", "B006"],
  ["牛肋条", "牛肉", "B007"],
  ["牛键子", "牛肉", "B008"],
  ["羊排", "羊肉", "B009"],
  ["羊腿", "羊肉", "B010"],
  ["鸡翅中", "鸡肉", "B011"],
  ["鸡大腿", "鸡肉", "B012"]
];
const AMOUNTS = [166, 177, 170, 114, 211, 148, 219, 283, 139, 282, 210, 257, 194, 131, 247, 223, 122, 142, 110, 249, 298, 195, 190, 281, 185, 248];

class DataSheet extends BaseElement {
  render() {
    const blank = "<i></i>".repeat(5);
    const head = COLUMNS.map((c, i) => `<b class="${i === 0 ? "current" : ""}">${c}<ui-icon name="headDrop"></ui-icon></b>`).join("");
    // the product list repeats, only the amounts differ
    const rows = AMOUNTS.map((amount, i) => {
      const [name, kind, code] = PRODUCTS[i % PRODUCTS.length];
      const first = i === 0 ? `<mark>${name}</mark>` : name;
      const cls = i === 0 ? "row active" : i % 2 ? "row alt" : "row";
      return `<div class="${cls}"><s></s><span>${first}</span><span>${kind}</span><span class="code"><em>${code}</em></span><span class="num">${amount}</span>${blank}</div>`;
    }).join("");
    return `
<style>
  :host { display: block; flex: 1; min-width: 0; overflow: hidden; background: #fff; font: 300 18px/22px "Noto Sans CJK SC", sans-serif; color: #2a2a2a; }
  .head, .row { display: grid; grid-template-columns: 23px repeat(8, 118px) 1fr; grid-template-rows: 23px; height: 23px; }
  .head { background: #f7f8fe; }
  .head > b, .head > s { box-sizing: border-box; background: #dfe2e7; border-right: 1px solid #b5b9c2; border-bottom: 1px solid #c3c8d2; }
  .head > b { display: flex; align-items: center; justify-content: space-between; padding: 0 7px 0 13px; font-weight: 300; white-space: nowrap; }
  .head > b.current { background: linear-gradient(#fed65c, #fff07f); }
  .head > b ui-icon { margin-top: 2px; }
  .head > s { padding: 8px 0 0 7px; line-height: 0; }
  .row > * { box-sizing: border-box; height: 23px; border-right: 1px solid #d0d7e5; border-bottom: 1px solid #d0d7e5; }
  .row > s { background: #dfe2e7; border-color: #b0b5be; }
  .row > span { padding: 1px 0 0 4px; line-height: 22px; white-space: nowrap; }
  .row > .code, .row > .num { font: 18px/24px "Liberation Serif", serif; padding-left: 3px; }
  .code em { display: inline-block; font-style: normal; transform: scaleX(.9); transform-origin: 0 50%; }
  .row > .num { text-align: right; padding-right: 1px; }
  .row > i { border-color: #f0f1f4; }
  .alt > span { background: #f4f4f4; }
  .active > span { background: #a5cef0; color: #000; }
  .active > span:nth-child(2) { background: #fff; border: 2px solid #f4aeb2; border-width: 1px 2px 2px 0; line-height: 20px; }
  .active > s { background: #fed65c; }
  mark { display: inline-block; height: 20px; background: #000; color: #fff; }
</style>
<div class="head"><s><ui-icon name="corner"></ui-icon></s>${head}</div>${rows}`;
  }
}
customElements.define("data-sheet", DataSheet);

class ScrollBar extends BaseElement {
  render() {
    return `
<style>
  :host { display: flex; flex-direction: column; box-sizing: border-box; flex: none; width: 21px; padding: 2px 2px 2px 1px; background: #e4e4e6; }
  div { box-sizing: border-box; width: 19px; border: 1px solid #808080; background: #fff; }
  .btn { display: flex; align-items: center; justify-content: center; height: 19px; flex: none; }
  .thumb { height: 56px; flex: none; }
  .track { flex: 1; border: 0; background: #cdcdcd; }
</style>
<div class="btn"><ui-icon name="up"></ui-icon></div><div class="thumb"></div><div class="track"></div><div class="btn"><ui-icon name="down"></ui-icon></div>`;
  }
}
customElements.define("scroll-bar", ScrollBar);

class RecordBar extends BaseElement {
  render() {
    return `
<style>
  :host { display: flex; align-items: center; box-sizing: border-box; height: 22px; overflow: hidden; border-top: 1px solid #a3a7ad; border-bottom: 1px solid #c1c3c7; background: linear-gradient(#f3f4f6 55%, #e3e5e9 55%); color: #444; }
  .label { box-sizing: border-box; width: 47px; padding: 1px 0 0 5px; flex: none; white-space: nowrap; }
  .box { box-sizing: border-box; height: 20px; flex: none; margin-top: 2px; padding-left: 2px; line-height: 21px; border: 1px solid #c5c7cc; background: #fff; color: #000; overflow: hidden; }
  .sep { width: 1px; height: 22px; flex: none; background: #a8abb1; }
  .off { margin: 1px 9px 0 2px; color: #b0b0b0; white-space: nowrap; }
  .corner { width: 21px; height: 22px; flex: none; margin-left: auto; background: #c3c5ca; border-left: 1px solid #a5a8ae; }
</style>
<div class="label">记录:</div>
<ui-icon name="first"></ui-icon><ui-icon name="prev" style="margin:0 8px 0 13px"></ui-icon>
<div class="box" style="width:113px">1</div>
<ui-icon name="next" style="margin:0 15px 0 11px"></ui-icon><ui-icon name="last" style="margin-right:8px"></ui-icon><ui-icon name="addRecord"></ui-icon>
<div class="sep" style="margin:0 9px 0 8px"></div>
<ui-icon name="noFilter"></ui-icon><span class="off">无筛选器</span>
<div class="sep" style="margin-right:7px"></div>
<div class="box" style="width:88px;padding-left:1px">搜索</div>
<div class="corner"></div>`;
  }
}
customElements.define("record-bar", RecordBar);

class DocumentArea extends BaseElement {
  render() {
    return `
<style>
  :host { display: flex; position: relative; flex-direction: column; flex: 1; min-width: 0; border-left: 1px solid #8c9099; background: #f3f1f1; }
  .tabs { display: flex; flex: none; box-sizing: border-box; height: 30px; border-bottom: 1px solid #8f939a; }
  .tabs ui-icon { margin: 10px 9px 0 auto; }
  .body { display: flex; flex: 1; min-height: 0; }
  .frame { position: absolute; left: 0; top: 5px; box-sizing: border-box; width: 463px; height: 295px; border: 3px solid #ff3537; z-index: 2; }
</style>
<div class="tabs">
  <sheet-tab icon="table">销售表</sheet-tab>
  <sheet-tab icon="query" active>查询1</sheet-tab>
  <ui-icon name="closeDoc"></ui-icon>
</div>
<div class="body"><data-sheet></data-sheet><scroll-bar></scroll-bar></div>
<record-bar></record-bar>
<div class="frame"></div>`;
  }
}
customElements.define("document-area", DocumentArea);

class StatusBar extends BaseElement {
  render() {
    return `
<style>
  :host { display: flex; align-items: center; height: 26px; flex: none; padding-left: 10px; background: #f3f3f3; }
  .mode { margin-left: auto; margin-right: 24px; }
  .cell { display: flex; align-items: center; justify-content: center; width: 50px; height: 26px; font-size: 10px; color: #555; }
  .sql { font-weight: 500; }
  .on { background: #c6c6c6; }
  .last { margin-right: 15px; }
</style>
<span>数据表视图</span><span class="mode">数字</span>
<div class="cell on"><ui-icon name="sheetView"></ui-icon></div>
<div class="cell sql">SQL</div>
<div class="cell last"><ui-icon name="designView"></ui-icon></div>`;
  }
}
customElements.define("status-bar", StatusBar);

class AccessWindow extends BaseElement {
  render() {
    return `
<style>
  :host { display: flex; flex-direction: column; box-sizing: border-box; width: 1320px; height: 892px; overflow: hidden; background: #a4373a; padding-bottom: 1px; }
  .inner { display: flex; flex-direction: column; flex: 1; min-height: 0; margin: 0 1px; background: #f3f3f3; }
  .main { display: flex; flex: 1; min-height: 0; }
  .split { width: 6px; flex: none; background: #eceef0; }
</style>
<title-bar></title-bar>
<ribbon-tabs></ribbon-tabs>
<div class="inner">
  <app-ribbon></app-ribbon>
  <div class="main"><nav-pane></nav-pane><div class="split"></div><document-area></document-area></div>
  <status-bar></status-bar>
</div>`;
  }
}
customElements.define("access-window", AccessWindow);
</script>
</body>
</html>
